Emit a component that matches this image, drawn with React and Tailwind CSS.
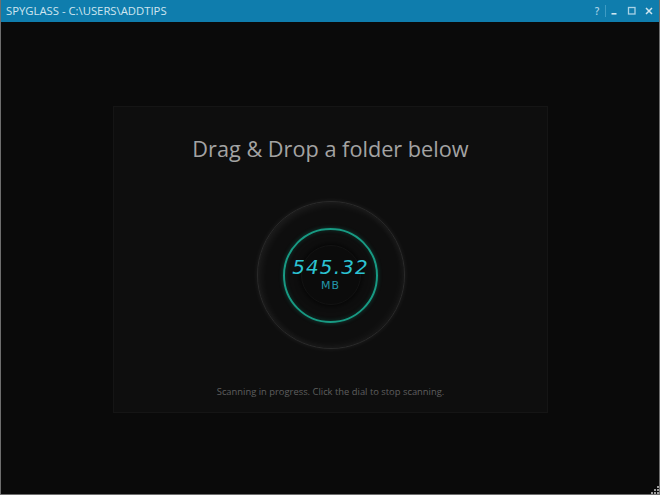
export default function App() {
  return (
    <div className="w-[660px] h-[495px] flex flex-col bg-[#0a0a0a] border-x border-b border-[#6e6e6e] overflow-hidden relative font-['Open_Sans',sans-serif]">
      <header className="h-[22px] shrink-0 bg-[#0f7dad] flex items-center justify-between pl-[6px] pr-[6px] -mx-px">
        <span className="text-[11.3px] text-[#cfe6f0] leading-none">SPYGLASS - C:\USERS\ADDTIPS</span>
        <div className="flex items-center text-[#a9d3e6]">
          <span className="text-[10px] font-semibold leading-none w-[10px] text-center">?</span>
          <span className="w-px h-[12px] bg-[#3f9cc4] ml-[3px] mr-[4px]" />
          <svg className="w-[10px] h-[10px] mr-[7px]" viewBox="0 0 10 10"><rect x="1.5" y="7" width="5" height="1.6" fill="#cfe6f0" /></svg>
          <svg className="w-[10px] h-[10px] mr-[7px]" viewBox="0 0 10 10" fill="none" stroke="#a9d3e6" strokeWidth="1.3"><rect x="1.5" y="1.5" width="6.5" height="6.5" /></svg>
          <svg className="w-[10px] h-[10px]" viewBox="0 0 10 10" fill="none" stroke="#cfe6f0" strokeWidth="1.5"><path d="M2 2l6 6M8 2l-6 6" /></svg>
        </div>
      </header>

      <main className="flex-1 flex justify-center pt-[84px] pl-px">
        <section className="w-[435px] h-[307px] bg-[#0e0e0e] border border-[#151515] flex flex-col items-center">
          <h1 className="mt-[25px] text-[21.7px] leading-[34px] text-[#a3a3a3]">Drag &amp; Drop a folder below</h1>

          <button className="mt-[35px] w-[148px] h-[148px] rounded-full flex items-center justify-center bg-[#0e0e0e] border border-[#2a2a2a] shadow-[0_0_5px_rgba(255,255,255,0.08),inset_-2px_-2px_8px_rgba(255,255,255,0.04),inset_2px_2px_8px_rgba(255,255,255,0.07)]">
            <div className="w-[95px] h-[95px] rounded-full border-2 border-[#189a83] shadow-[0_0_4px_rgba(23,163,137,0.35),inset_0_0_4px_rgba(23,163,137,0.25)] flex items-center justify-center relative">
              <div className="w-[60px] h-[60px] rounded-full bg-[#0b0b0b] border border-[#131313] shadow-[0_0_6px_rgba(0,0,0,0.9)]" />
              <div className="absolute inset-0 flex flex-col items-center justify-center">
                <span className="font-['DejaVu_Sans',sans-serif] font-light italic text-[20px] leading-[22px] tracking-[1.1px] text-[#2cc3d2] mt-[-3px] whitespace-nowrap">545.32</span>
                <span className="font-['DejaVu_Sans',sans-serif] text-[11px] leading-[13px] tracking-[1px] text-[#2295a8] mt-[1px]">MB</span>
              </div>
            </div>
          </button>

          <p className="mt-[36px] text-[9.4px] leading-[14px] text-[#5e5e5e]">Scanning in progress. Click the dial to stop scanning.</p>
        </section>
      </main>

      <svg className="absolute right-0 bottom-0 w-[9px] h-[9px]" viewBox="0 0 9 9" fill="#9a9a9a">
        <rect x="7" y="1" width="2" height="2" />
        <rect x="4" y="4" width="2" height="2" />
        <rect x="7" y="4" width="2" height="2" />
        <rect x="1" y="7" width="2" height="2" />
        <rect x="4" y="7" width="2" height="2" />
        <rect x="7" y="7" width="2" height="2" />
      </svg>
    </div>
  );
}
